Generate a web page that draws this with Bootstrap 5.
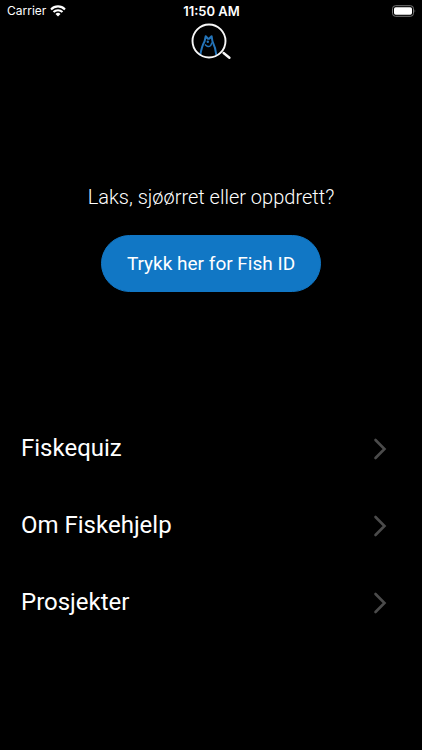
<!DOCTYPE html>
<html lang="nb">
<head>
<meta charset="utf-8">
<meta name="viewport" content="width=device-width, initial-scale=1">
<title>Fiskehjelp</title>
<link href="https://cdn.jsdelivr.net/npm/bootstrap@5.3.0/dist/css/bootstrap.min.css" rel="stylesheet">
<style>
body { background: #000; color: #fff; font-family: Roboto, sans-serif; }
.status-bar { height: 22px; padding: 0 6px 0 7px; font: 12px/22px Inter, sans-serif; }
.status-time { font-size: 13px; font-weight: 600; }
.brand-link { line-height: 0; padding-top: 1px; }
.intro { padding-top: 122px; }
.intro-text { font-size: 20px; line-height: 28px; font-weight: 300; }
.btn-fish { --bs-btn-color: #fff; --bs-btn-bg: #1177c5; --bs-btn-border-color: #1177c5; --bs-btn-hover-color: #fff; --bs-btn-hover-bg: #0e69ae; --bs-btn-hover-border-color: #0e69ae; font-size: 19px; line-height: 31px; padding: 12px 25px; margin-top: 24px; }
.menu { padding-top: 118px; }
.menu-link { --bs-list-group-bg: transparent; --bs-list-group-color: #fff; --bs-list-group-action-hover-bg: #111; --bs-list-group-action-hover-color: #fff; font-size: 24px; line-height: 37px; padding: 20px 35px 20px 21px; }
</style>
</head>
<body>
<header>
  <div class="status-bar row g-0 align-items-center">
    <div class="col d-flex align-items-center gap-1">
      <span>Carrier</span>
      <svg width="16" height="12" viewBox="0 0 16 12" fill="none" stroke="#fff" stroke-width="2.1" aria-hidden="true">
        <path d="M1 4.400C5 .4 11 .4 15 4.400M3.500 7C6 4.600 10 4.600 12.500 7"/>
        <path d="M5.500 8.900Q8 6.800 10.500 8.900L8 11.500Z" fill="#fff" stroke="none"/>
      </svg>
    </div>
    <div class="col-auto status-time">11:50 AM</div>
    <div class="col d-flex justify-content-end">
      <svg width="25" height="12" viewBox="0 0 25 12" aria-hidden="true">
        <rect x="1.500" y=".7" width="21" height="10.600" rx="3" fill="none" stroke="#777"/>
        <rect x="3" y="2.200" width="18" height="7.600" rx="1.700" fill="#fff"/>
        <path d="M23.600 4.200Q25 6 23.600 7.800Z" fill="#777"/>
      </svg>
    </div>
  </div>
  <div class="text-center">
    <a href="#" class="brand-link d-inline-block" aria-label="Fiskehjelp">
      <svg width="40" height="38" viewBox="0 0 40 38" fill="none" aria-hidden="true">
        <path d="M9.200 32.500C10 27 11.500 22 13.600 18.200L14.700 13.300L17 15.800H18L20.600 13.200L21.400 18.100C23.300 22 24.800 27 25.300 32" stroke="#2474b9" stroke-width="2" stroke-linejoin="round"/>
        <path d="M14 21.500Q17 25 19.700 22.500L21 19.500" stroke="#2474b9" stroke-width="1.500"/>
        <circle cx="16.800" cy="18.800" r="1.200" fill="#2474b9"/>
        <circle cx="18" cy="18" r="16.500" stroke="#f7f7f7" stroke-width="1.900"/>
        <path d="M32.600 30L38.400 34.700" stroke="#f7f7f7" stroke-width="2.400" stroke-linecap="round"/>
      </svg>
    </a>
  </div>
</header>
<main>
  <section class="intro text-center">
    <p class="intro-text mb-0">Laks, sjøørret eller oppdrett?</p>
    <button type="button" class="btn btn-fish rounded-pill">Trykk her for Fish ID</button>
  </section>
  <nav class="menu list-group list-group-flush" aria-label="Meny">
    <a href="#" class="menu-link list-group-item list-group-item-action border-0 d-flex align-items-center justify-content-between">Fiskequiz
      <svg width="14" height="22" viewBox="0 0 14 22" fill="none" stroke="#4b4b4b" stroke-width="2.600" stroke-linecap="round" aria-hidden="true"><path d="M2.500 2L11.500 11L2.500 20"/></svg></a>
    <a href="#" class="menu-link list-group-item list-group-item-action border-0 d-flex align-items-center justify-content-between">Om Fiskehjelp
      <svg width="14" height="22" viewBox="0 0 14 22" fill="none" stroke="#4b4b4b" stroke-width="2.600" stroke-linecap="round" aria-hidden="true"><path d="M2.500 2L11.500 11L2.500 20"/></svg></a>
    <a href="#" class="menu-link list-group-item list-group-item-action border-0 d-flex align-items-center justify-content-between">Prosjekter
      <svg width="14" height="22" viewBox="0 0 14 22" fill="none" stroke="#4b4b4b" stroke-width="2.600" stroke-linecap="round" aria-hidden="true"><path d="M2.500 2L11.500 11L2.500 20"/></svg></a>
  </nav>
</main>
<script src="https://cdn.jsdelivr.net/npm/bootstrap@5.3.0/dist/js/bootstrap.bundle.min.js"></script>
</body>
</html>
